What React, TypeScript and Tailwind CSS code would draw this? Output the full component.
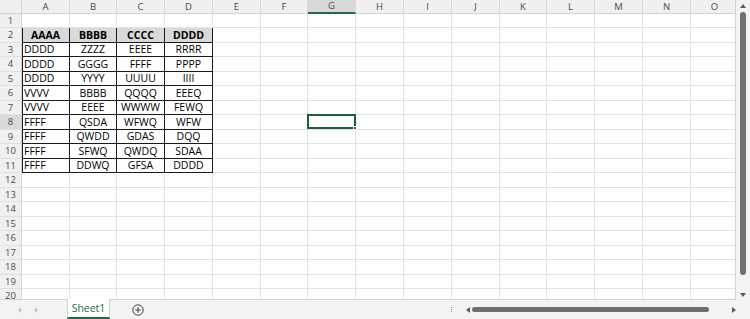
import React from "react";

const COLS = ["A", "B", "C", "D", "E", "F", "G", "H", "I", "J", "K", "L", "M", "N", "O"];
const ROW_H = [14, 15, 14, 15, 14, 15, 14, 15, 14, 15, 14, 15, 14, 15, 14, 15, 14, 15, 14, 15];

const DATA: string[][] = [
  ["AAAA", "BBBB", "CCCC", "DDDD"],
  ["DDDD", "ZZZZ", "EEEE", "RRRR"],
  ["DDDD", "GGGG", "FFFF", "PPPP"],
  ["DDDD", "YYYY", "UUUU", "IIII"],
  ["VVVV", "BBBB", "QQQQ", "EEEQ"],
  ["VVVV", "EEEE", "WWWW", "FEWQ"],
  ["FFFF", "QSDA", "WFWQ", "WFW"],
  ["FFFF", "QWDD", "GDAS", "DQQ"],
  ["FFFF", "SFWQ", "QWDQ", "SDAA"],
  ["FFFF", "DDWQ", "GFSA", "DDDD"],
];

function Cell({ r, c }: { r: number; c: number }) {
  const inTable = r >= 2 && r <= 11 && c <= 3;
  const aboveTable = r === 1 && c <= 3;
  const text = inTable ? DATA[r - 2][c] : "";
  const isHeader = r === 2 && inTable;
  const selected = r === 8 && c === 6;
  const leftAlign = inTable && c === 0 && !isHeader;
  const cls = [
    "relative flex items-center overflow-visible whitespace-nowrap text-[10.5px] leading-none text-black",
    inTable
      ? "border-r border-b border-r-[#1a1a1a] border-b-[#1a1a1a]"
      : "border-r border-b border-r-[#e2e2e2] border-b-[#e2e2e2]",
    aboveTable ? "border-b-[#1a1a1a]" : "",
    inTable && c === 0 ? "shadow-[inset_1px_0_0_#1a1a1a]" : "",
    leftAlign ? "pl-[2px] justify-start" : "justify-center",
    isHeader ? "bg-[#d9d9d9] font-bold" : "bg-white",
  ].join(" ");
  return (
    <div className={cls}>
      {text}
      {selected && (
        <div className="absolute -left-[1px] -top-[1px] -right-[1px] bottom-0 border-2 border-[#1d5e3d] z-10">
          <div className="absolute -right-[3px] -bottom-[3px] w-[4px] h-[4px] bg-[#1d5e3d] border border-white" />
        </div>
      )}
    </div>
  );
}

export default function App() {
  const gridCols =
    "grid-cols-[22px_48px_47px_48px_48px_48px_47px_48px_48px_48px_48px_47px_48px_48px_48px_48px]";
  const gridRows =
    "grid-rows-[14px_14px_15px_14px_15px_14px_15px_14px_15px_14px_15px_14px_15px_14px_15px_14px_15px_14px_15px_14px_15px]";
  return (
    <div
      className="w-[750px] h-[319px] overflow-hidden bg-white flex flex-col"
      style={{ fontFamily: '"Open Sans", "Noto Sans", sans-serif' }}
    >
      <div className="flex h-[300px]">
        <div className="w-[736px] h-[300px] overflow-hidden border-r border-b border-[#d4d4d4]">
          <div className={`grid ${gridCols} ${gridRows} w-[767px]`}>
            <div className="bg-[#f0f0f0] border-r border-b border-[#d4d4d4]" />
            {COLS.map((col, i) => (
              <div
                key={col}
                className={`flex items-center justify-center text-[9.5px] leading-none text-[#4a4a4a] border-r border-[#dadada] ${
                  i === 6
                    ? "bg-[#d9d9d9] border-b-2 border-b-[#1d6b44]"
                    : "bg-[#f0f0f0] border-b border-b-[#d4d4d4]"
                }`}
              >
                {col}
              </div>
            ))}
            {ROW_H.map((_, ri) => {
              const r = ri + 1;
              return (
                <React.Fragment key={r}>
                  <div
                    className={`flex items-center justify-center text-[9.5px] leading-none text-[#4a4a4a] border-r border-r-[#d4d4d4] border-b border-b-[#e0e0e0] ${
                      r === 8 ? "bg-[#dadada]" : "bg-[#f0f0f0]"
                    }`}
                  >
                    {r}
                  </div>
                  {COLS.map((_, c) => (
                    <Cell key={c} r={r} c={c} />
                  ))}
                </React.Fragment>
              );
            })}
          </div>
        </div>
        <div className="w-[14px] h-[300px] bg-[#f3f3f3] flex flex-col items-center pt-[4px] pb-[3px]">
          <div className="w-0 h-0 border-l-[3px] border-l-transparent border-r-[3px] border-r-transparent border-b-[4px] border-b-[#5a5a5a]" />
          <div className="mt-[4px] w-[6px] h-[263px] rounded-full bg-[#6f6f6f]" />
          <div className="flex-1" />
          <div className="w-0 h-0 border-l-[3px] border-l-transparent border-r-[3px] border-r-transparent border-t-[4px] border-t-[#5a5a5a]" />
        </div>
      </div>
      <div className="h-[19px] bg-[#f3f3f3] flex items-stretch">
        <div className="w-[67px] flex items-center pl-[18px] gap-[14px]">
          <div className="w-0 h-0 border-t-[3px] border-t-transparent border-b-[3px] border-b-transparent border-r-[3px] border-r-[#c2c2c2]" />
          <div className="w-0 h-0 border-t-[3px] border-t-transparent border-b-[3px] border-b-transparent border-l-[3px] border-l-[#c2c2c2]" />
        </div>
        <div className="w-[43px] bg-white flex items-center justify-center text-[10.5px] leading-none text-[#1d6b44] border-b-2 border-[#1d6b44] border-l border-r border-l-[#d4d4d4] border-r-[#d4d4d4] -mt-px">
          Sheet1
        </div>
        <div className="w-[55px] flex items-center justify-center">
          <svg width="12" height="12" viewBox="0 0 12 12">
            <circle cx="6" cy="6" r="5.2" fill="none" stroke="#444" strokeWidth="1" />
            <path d="M6 3.3v5.4M3.3 6h5.4" stroke="#444" strokeWidth="1.1" />
          </svg>
        </div>
        <div className="w-[280px]" />
        <div className="w-[12px] flex flex-col items-center justify-center gap-[1px]">
          <div className="w-[1px] h-[1px] bg-[#8a8a8a]" />
          <div className="w-[1px] h-[1px] bg-[#8a8a8a]" />
          <div className="w-[1px] h-[1px] bg-[#8a8a8a]" />
        </div>
        <div className="flex items-center pl-[9px]">
          <div className="w-0 h-0 border-t-[3px] border-t-transparent border-b-[3px] border-b-transparent border-r-[4px] border-r-[#5a5a5a]" />
          <div className="ml-[2px] w-[237px] h-[5px] rounded-full bg-[#6f6f6f]" />
          <div className="ml-[23px] w-0 h-0 border-t-[3px] border-t-transparent border-b-[3px] border-b-transparent border-l-[4px] border-l-[#5a5a5a]" />
        </div>
      </div>
    </div>
  );
}
